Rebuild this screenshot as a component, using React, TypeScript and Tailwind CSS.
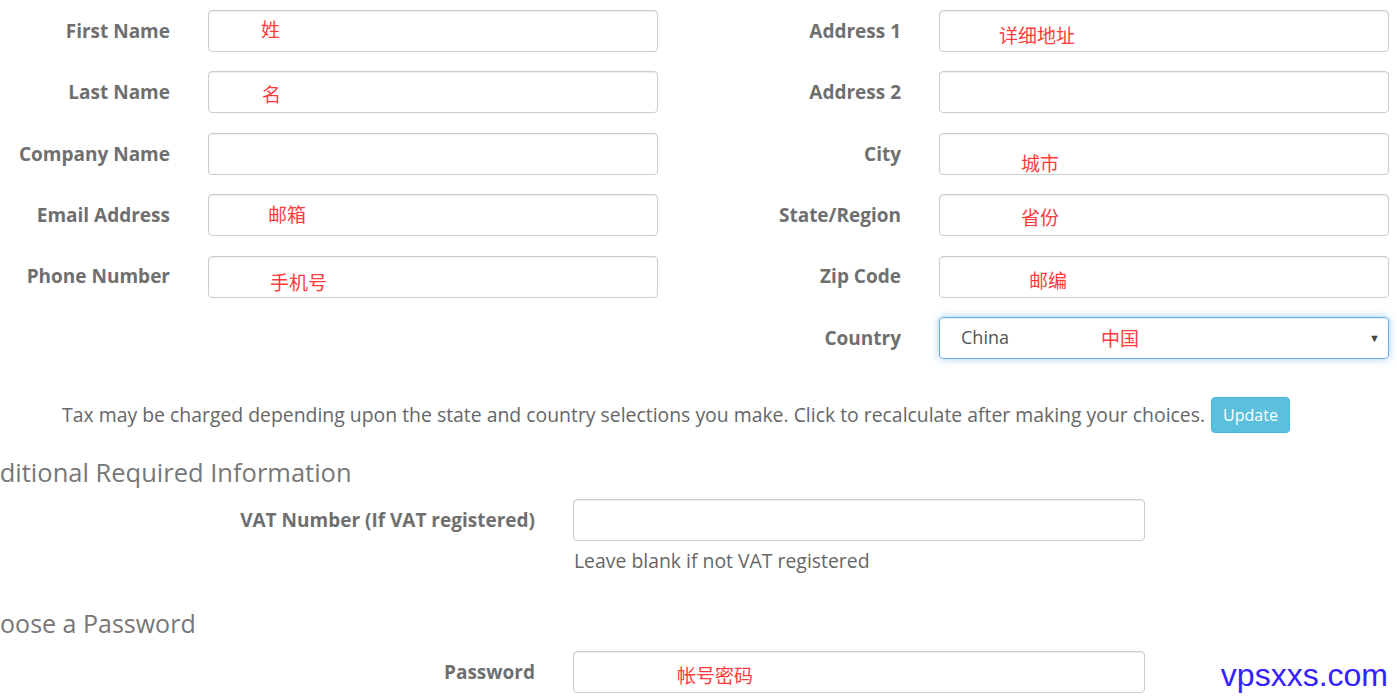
import React from "react";

type Field = { label: string; note?: string; noteX?: number; noteY?: number };

const leftFields: Field[] = [
  { label: "First Name", note: "姓", noteX: 53, noteY: -3 },
  { label: "Last Name", note: "名", noteX: 54, noteY: 1 },
  { label: "Company Name" },
  { label: "Email Address", note: "邮箱", noteX: 60, noteY: -2 },
  { label: "Phone Number", note: "手机号", noteX: 62, noteY: 4 },
];

const rightFields: Field[] = [
  { label: "Address 1", note: "详细地址", noteX: 60, noteY: 3 },
  { label: "Address 2" },
  { label: "City", note: "城市", noteX: 82, noteY: 8 },
  { label: "State/Region", note: "省份", noteX: 82, noteY: 1 },
  { label: "Zip Code", note: "邮编", noteX: 90, noteY: 2 },
];

const cjk = "font-['Noto_Sans_CJK_SC',sans-serif]";

function RedNote({ text, x, y }: { text: string; x: number; y: number }) {
  return (
    <span
      className={`absolute top-1/2 text-[19px] leading-none text-[#ff3b3b] ${cjk} pointer-events-none`}
      style={{ left: x, transform: `translateY(calc(-50% + ${y}px))` }}
    >
      {text}
    </span>
  );
}

function FormRow({ field }: { field: Field }) {
  return (
    <div className="flex items-center h-[42px]">
      <label className="w-[170px] shrink-0 text-right font-bold text-[19px] text-[#6f6f6f]">
        {field.label}
      </label>
      <div className="relative ml-[38px] w-[450px] h-full">
        <input
          type="text"
          className="w-full h-full rounded border border-[#cccccc] bg-white shadow-[inset_0_1px_1px_rgba(0,0,0,0.075)] outline-none"
        />
        {field.note && <RedNote text={field.note} x={field.noteX!} y={field.noteY!} />}
      </div>
    </div>
  );
}

export default function App() {
  return (
    <div className="w-[1397px] h-[697px] overflow-hidden bg-white font-['Open_Sans',sans-serif] text-[#666] relative">
      <div className="pt-[10px] grid grid-cols-[658px_658px] gap-x-[73px]">
        <div className="flex flex-col gap-y-[19.4px]">
          {leftFields.map((f) => (
            <FormRow key={f.label} field={f} />
          ))}
        </div>
        <div className="flex flex-col gap-y-[19.4px]">
          {rightFields.map((f) => (
            <FormRow key={f.label} field={f} />
          ))}
          <div className="flex items-center h-[42px]">
            <label className="w-[170px] shrink-0 text-right font-bold text-[19px] text-[#6f6f6f]">
              Country
            </label>
            <div className="relative ml-[38px] w-[450px] h-full rounded border border-[#66afe9] shadow-[inset_0_1px_1px_rgba(0,0,0,0.075),0_0_8px_rgba(102,175,233,0.6)] flex items-center pl-[21px] pr-[8px]">
              <span className="text-[18px] text-[#555]">China</span>
              <span className={`ml-[92px] text-[19px] text-[#ff3b3b] ${cjk}`}>中国</span>
              <span className="ml-auto text-[11px] text-[#444]">▼</span>
            </div>
          </div>
        </div>
      </div>

      <div className="w-[1352px] mt-[38px] flex items-center justify-center gap-[6px]">
        <p className="text-[19.4px] text-[#666] whitespace-nowrap">
          Tax may be charged depending upon the state and country selections you make. Click to recalculate after making your choices.
        </p>
        <button className="h-[36px] px-[11px] rounded bg-[#5bc0de] border border-[#46b8da] text-white text-[16px] shrink-0">
          Update
        </button>
      </div>

      <h3 className="ml-[-32px] mt-[22px] text-[25.5px] font-normal text-[#777] leading-[34px] whitespace-nowrap">
        Additional Required Information
      </h3>
      <div className="flex items-center h-[42px] mt-[10px]">
        <label className="w-[535px] shrink-0 text-right font-bold text-[19px] text-[#6f6f6f]">
          VAT Number (If VAT registered)
        </label>
        <input
          type="text"
          className="ml-[38px] w-[572px] h-full rounded border border-[#cccccc] shadow-[inset_0_1px_1px_rgba(0,0,0,0.075)] outline-none"
        />
      </div>
      <p className="ml-[574px] mt-[5px] text-[19.4px] text-[#666]">Leave blank if not VAT registered</p>

      <h3 className="ml-[-31px] mt-[31px] text-[25px] font-normal text-[#777] leading-[34px] whitespace-nowrap">
        Choose a Password
      </h3>
      <div className="flex items-center h-[42px] mt-[11px]">
        <label className="w-[535px] shrink-0 text-right font-bold text-[19px] text-[#6f6f6f]">
          Password
        </label>
        <div className="relative ml-[38px] w-[572px] h-full">
          <input
            type="password"
            className="w-full h-full rounded border border-[#cccccc] shadow-[inset_0_1px_1px_rgba(0,0,0,0.075)] outline-none"
          />
          <RedNote text="帐号密码" x={104} y={2} />
        </div>
      </div>

      <div className="absolute right-[9px] bottom-[6px] text-[32px] leading-none text-[#3322ff] font-['Liberation_Sans',sans-serif]">
        vpsxxs.com
      </div>
    </div>
  );
}
